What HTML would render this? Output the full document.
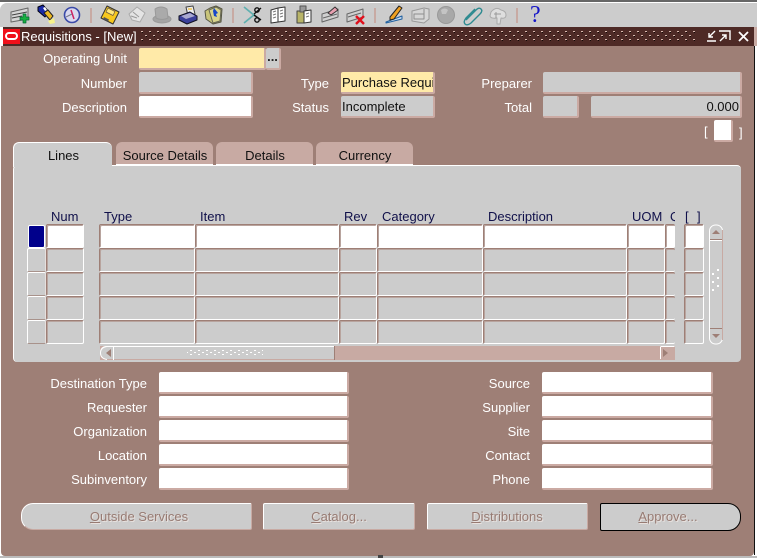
<!DOCTYPE html>
<html><head><meta charset="utf-8"><title>Requisitions</title>
<style>
html,body{margin:0;padding:0;width:757px;height:558px;overflow:hidden;background:#fff}
body{position:relative;font-family:"Liberation Sans",Arial,sans-serif;font-size:13px;letter-spacing:0;color:#000}
div,span,svg{position:absolute;box-sizing:border-box}
.l{color:#fff;text-align:right;line-height:14px;white-space:nowrap;height:14px}
.h{color:#10104a;line-height:14px;white-space:nowrap;top:209px}
.f{background:#ccc;border-style:solid;border-width:0 2px 2px 0;border-color:#cbaaa3;border-radius:2px;height:22px;line-height:21px;padding-left:1px;white-space:nowrap;overflow:hidden;color:#111}
.w{background:#fff}
.c{background:#ccc;border-style:solid;border-width:1px;border-color:#9e7f76 #fff #fff #9e7f76;box-shadow:inset 1px 1px 0 #b8a49e;height:24px;border-radius:2px}
.a{background:#fff}
.s{background:#ccc;border-style:solid;border-width:1px;border-color:#fff #e6e0de #a8928b #fff;height:24px;border-radius:2px;left:27px;width:19px}
.t{background:#c8aaa3;top:142px;height:23px;border-radius:6px 6px 0 0;text-align:center;line-height:27px;border-bottom:1px solid #fff;color:#111;padding-left:1px}
.b{background:#ccc;top:503px;height:27px;border:1px solid #fff;border-right-color:#c8aaa3;border-bottom-color:#c8aaa3;border-radius:2px;text-align:center;color:#977b73;line-height:26px;text-shadow:1px 1px 0 #e9e2df}
u{text-decoration:underline}
.sep{width:2px;height:15px;top:8px;background:#c8aaa3}
</style></head><body>
<div style="left:0;top:0;width:757px;height:2px;background:#666"></div>
<div style="left:0;top:3px;width:757px;height:24px;background:#ccc;border-radius:7px 0 0 0"></div>

<!-- toolbar icons -->
<svg style="left:0;top:3px" width="560" height="24" viewBox="0 3 560 24">
<g fill="none" stroke-linejoin="round">
<!-- new -->
<path d="M11 12l17-4v11l-17 3z" fill="#d6d6d6" stroke="#666"/><path d="M12 15l15-3M12 18l10-2" stroke="#444"/>
<path d="M23 14h3v3h3v3h-3v3h-3v-3h-3v-3h3z" fill="#18b040" stroke="#063" stroke-width=".7"/>
<!-- flashlight -->
<path d="M38 7l5-2 6 7-4 5-7-6z" fill="#1a2aa8" stroke="#001"/><path d="M43 8l2-1 2 3-2 1z" fill="#fff"/>
<path d="M44 13l4-3 5 6-3 4z" fill="#ecb820" stroke="#222"/><path d="M48 21l6-3 1 5-5 1z" fill="#f6f28a"/>
<!-- compass -->
<circle cx="72" cy="15" r="7.500" fill="#d8d8ee" stroke="#3a4aa8" stroke-width="1.600"/><path d="M71 10l3 9" stroke="#d02060" stroke-width="1.500"/><path d="M66 17l6-3" stroke="#778"/>
<!-- save -->
<path d="M107 6l12 6-6 12-12-6z" fill="#f7c81e" stroke="#333"/><path d="M108 8l7 3.500-2 4-7-3.500z" fill="#ffe87a" stroke="#654" stroke-width=".7"/><path d="M104 17l5 2.500-1 2-5-2.500z" fill="#555"/>
<!-- disabled doc -->
<path d="M129 14l8-7 8 6-5 9-8-2z" fill="#e4e4e4" stroke="#aaa"/><path d="M133 12l6 5M131 16l6 2" stroke="#999"/>
<!-- hat -->
<ellipse cx="162" cy="19" rx="9" ry="4" fill="#a4a4a4" stroke="#999"/><path d="M155 9q6-4 12 0l1 9q-6 3-12 0z" fill="#aaa" stroke="#999"/>
<!-- printer -->
<path d="M186 7l7-1 2 8-7 2z" fill="#eee" stroke="#444"/><path d="M179 16l11-4 7 4v4l-10 4-8-4z" fill="#3a3f9a" stroke="#112"/><path d="M181 16l9-3 5 3-9 3z" fill="#a9a9d0"/><path d="M188 9h4" stroke="#f0b000"/>
<!-- folder -->
<path d="M205 11l5-3 6-2 6 3-1 13-8 2-7-5z" fill="#c8c47a" stroke="#554"/><path d="M209 10l7-3 5 3-1 11-7 2z" fill="#d8d48c" stroke="#665"/><path d="M214 8l4 5-2 1 1 3-3-1-1-5z" fill="#1848c8"/>
<!-- scissors -->
<path d="M244 7l11 9M244 23l11-9" stroke="#5fb0b0" stroke-width="1.700"/><path d="M254 14l7-6M254 15l7 5" stroke="#111" stroke-width="1.400"/><circle cx="257" cy="10" r="2.200" stroke="#111" stroke-width="1.400"/><circle cx="257" cy="20" r="2.200" stroke="#111" stroke-width="1.400"/>
<!-- copy -->
<path d="M271 10l7-2v14l-7 1z" fill="#fff" stroke="#333"/><path d="M278 8l7-1v14l-7 1z" fill="#fff" stroke="#333"/><path d="M273 12l3-1M273 15l3-1M273 18l3-1M280 11l3-1M280 14l3-1M280 17l3-1" stroke="#777"/>
<!-- paste -->
<path d="M297 11h7v12h-7z" fill="#b8b468" stroke="#444"/><path d="M300 6h6v6h-6z" fill="#999" stroke="#555"/><path d="M304 11l7-1v12l-7 1z" fill="#fff" stroke="#333"/><path d="M306 14l3-1M306 17l3-1" stroke="#777"/>
<!-- clear -->
<path d="M322 14l16-5v8l-16 5z" fill="#d0d0d0" stroke="#666"/><path d="M328 13l7-6 3 3-7 5z" fill="#e8a0b0" stroke="#333"/><path d="M323 18l14-4" stroke="#666"/>
<!-- delete -->
<path d="M347 14l16-5v8l-16 5z" fill="#d0d0d0" stroke="#666"/><path d="M348 17l13-4" stroke="#666"/><path d="M356 16l8 8M364 16l-8 8" stroke="#e0101c" stroke-width="2.400"/>
<!-- pen -->
<path d="M386 22l16-6v3l-16 4z" fill="#cde" stroke="#2060a0"/><path d="M390 17l9-11 3 2-8 11-4 1z" fill="#f0a020" stroke="#222"/>
<!-- disabled -->
<path d="M412 11l12-3 5 1v10l-5 4-12-2z" fill="#d6d6d6" stroke="#999"/><path d="M414 14h10v5h-10zM424 9v5" stroke="#8e8e8e"/>
<!-- globe -->
<circle cx="446" cy="15" r="8.500" fill="#a8a8a8" stroke="#999"/><path d="M441 10q4-3 7 0l-2 4-4 0z" fill="#c4c4c4"/>
<!-- clip -->
<path d="M466 20l10-10q3-3 5-1t-1 5l-9 9q-4 3-6 1t1-6l9-9" stroke="#2e8a90" stroke-width="1.400"/>
<!-- disabled tree -->
<path d="M491 12q5-6 10-2 5 1 5 5t-5 3l-1 6h-3v-6q-6 1-7-2z" fill="#dedede" stroke="#aaa"/><path d="M496 12v6M501 14h-7" stroke="#999"/>
<!-- help -->
<text x="530" y="22" font-family="Liberation Serif,serif" font-size="24" fill="#1414c8" letter-spacing="0">?</text>
</g></svg>
<div class="sep" style="left:90px"></div><div class="sep" style="left:232px"></div><div class="sep" style="left:374px"></div><div class="sep" style="left:516px"></div>

<!-- title bar -->
<div style="left:3px;top:27px;width:751px;height:19px;background:#4e2a26"></div>
<div style="left:3px;top:29px;width:17px;height:15px;background:#f0101a"></div>
<div style="left:5px;top:32px;width:13px;height:8px;border:2px solid #fff;border-radius:4px"></div>
<div style="left:21px;top:29px;color:#fff;line-height:15px;white-space:nowrap">Requisitions - [New]</div>
<svg style="left:141px;top:30px" width="556" height="13"><defs><pattern id="p" width="8" height="8" patternUnits="userSpaceOnUse"><rect x="0" y="1" width="2" height="1" fill="#d8b8ae"/><rect x="1" y="2" width="1" height="1" fill="#120806"/><rect x="4" y="5" width="2" height="1" fill="#d8b8ae"/><rect x="5" y="6" width="1" height="1" fill="#120806"/></pattern></defs><rect width="556" height="13" fill="url(#p)"/></svg>
<svg style="left:705px;top:29px" width="48" height="16" fill="none" stroke="#fff" stroke-width="1.400"><path d="M2 12h9M10 2l-6 6M4 4v4h4"/><path d="M14 2h11v9" /><path d="M15 12l6-6M17 6h4v4"/><path d="M34 3l9 9M43 3l-9 9" stroke-width="1.800"/></svg>

<!-- main body -->
<div style="left:1px;top:46px;width:753px;height:510px;background:#9e7f76;border-radius:0 0 4px 4px"></div>
<div style="left:754px;top:46px;width:1px;height:509px;background:#111"></div>
<div style="left:754px;top:27px;width:3px;height:19px;background:#c8aaa3"></div>
<div style="left:0;top:556px;width:757px;height:2px;background:#bbb"></div>
<div style="left:378px;top:555px;width:5px;height:3px;background:#444"></div>

<!-- header labels/fields -->
<div class="l" style="right:630px;top:52px">Operating Unit</div>
<div class="f" style="left:139px;top:48px;width:127px;background:#ffeaa8"></div>
<div class="f" style="left:266px;top:48px;width:15px;text-align:center;font-weight:bold;line-height:17px;padding:0;color:#222">...</div>
<div class="l" style="right:630px;top:77px">Number</div>
<div class="f" style="left:139px;top:72px;width:114px"></div>
<div class="l" style="right:630px;top:101px">Description</div>
<div class="f w" style="left:139px;top:96px;width:114px"></div>
<div class="l" style="right:428px;top:77px">Type</div>
<div class="f" style="left:341px;top:72px;width:94px;background:#ffeaa8">Purchase Requisition</div>
<div class="l" style="right:428px;top:101px">Status</div>
<div class="f" style="left:341px;top:96px;width:94px">Incomplete</div>
<div class="l" style="right:225px;top:77px">Preparer</div>
<div class="f" style="left:543px;top:72px;width:199px"></div>
<div class="l" style="right:225px;top:101px">Total</div>
<div class="f" style="left:543px;top:96px;width:36px"></div>
<div class="f" style="left:591px;top:96px;width:151px;text-align:right;padding-right:1px">0.000</div>
<div class="l" style="left:704px;top:125px">[</div>
<div class="f w" style="left:714px;top:120px;width:19px"></div>
<div class="l" style="left:739px;top:126px">]</div>

<!-- tabs -->
<div style="left:13px;top:165px;width:728px;height:197px;background:#ccc;border-top:1px solid #fff;border-left:1px solid #fff;border-radius:4px"></div>
<div class="t" style="left:116px;width:97px">Source Details</div>
<div class="t" style="left:216px;width:97px">Details</div>
<div class="t" style="left:316px;width:97px">Currency</div>
<div class="t" style="left:13px;height:25px;background:#ccc;border:0;border-top:1px solid #fff;border-left:1px solid #fff;line-height:26px;width:99px">Lines</div>

<!-- table headers -->
<div class="h" style="left:51px;top:210px">Num</div>
<div class="h" style="left:104px;top:210px">Type</div>
<div class="h" style="left:200px;top:210px">Item</div>
<div class="h" style="left:344px;top:210px">Rev</div>
<div class="h" style="left:382px;top:210px">Category</div>
<div class="h" style="left:488px;top:210px">Description</div>
<div class="h" style="left:632px;top:210px">UOM</div>
<div class="h" style="left:670px;top:210px;width:5px;overflow:hidden">Q</div>
<div class="h" style="left:685px;top:210px">[</div>
<div class="h" style="left:697px;top:210px">]</div>

<!-- rows -->
<div style="left:28px;top:225px;width:17px;height:23px;background:#00008b;border:1px solid #fff;border-radius:2px"></div>
<div class="c a" style="left:46px;top:224px;width:38px"></div><div class="c a" style="left:99px;top:224px;width:96px"></div><div class="c a" style="left:195px;top:224px;width:144px"></div><div class="c a" style="left:339px;top:224px;width:38px"></div><div class="c a" style="left:377px;top:224px;width:106px"></div><div class="c a" style="left:483px;top:224px;width:144px"></div><div class="c a" style="left:627px;top:224px;width:38px"></div><div class="c a" style="left:665px;top:224px;width:10px;border-right:0"></div><div class="c a" style="left:684px;top:224px;width:20px"></div>

<div class="s" style="top:248px"></div><div class="c" style="left:46px;top:248px;width:38px"></div><div class="c" style="left:99px;top:248px;width:96px"></div><div class="c" style="left:195px;top:248px;width:144px"></div><div class="c" style="left:339px;top:248px;width:38px"></div><div class="c" style="left:377px;top:248px;width:106px"></div><div class="c" style="left:483px;top:248px;width:144px"></div><div class="c" style="left:627px;top:248px;width:38px"></div><div class="c" style="left:665px;top:248px;width:10px;border-right:0"></div><div class="c" style="left:684px;top:248px;width:20px"></div>

<div class="s" style="top:272px"></div><div class="c" style="left:46px;top:272px;width:38px"></div><div class="c" style="left:99px;top:272px;width:96px"></div><div class="c" style="left:195px;top:272px;width:144px"></div><div class="c" style="left:339px;top:272px;width:38px"></div><div class="c" style="left:377px;top:272px;width:106px"></div><div class="c" style="left:483px;top:272px;width:144px"></div><div class="c" style="left:627px;top:272px;width:38px"></div><div class="c" style="left:665px;top:272px;width:10px;border-right:0"></div><div class="c" style="left:684px;top:272px;width:20px"></div>

<div class="s" style="top:296px"></div><div class="c" style="left:46px;top:296px;width:38px"></div><div class="c" style="left:99px;top:296px;width:96px"></div><div class="c" style="left:195px;top:296px;width:144px"></div><div class="c" style="left:339px;top:296px;width:38px"></div><div class="c" style="left:377px;top:296px;width:106px"></div><div class="c" style="left:483px;top:296px;width:144px"></div><div class="c" style="left:627px;top:296px;width:38px"></div><div class="c" style="left:665px;top:296px;width:10px;border-right:0"></div><div class="c" style="left:684px;top:296px;width:20px"></div>

<div class="s" style="top:320px"></div><div class="c" style="left:46px;top:320px;width:38px"></div><div class="c" style="left:99px;top:320px;width:96px"></div><div class="c" style="left:195px;top:320px;width:144px"></div><div class="c" style="left:339px;top:320px;width:38px"></div><div class="c" style="left:377px;top:320px;width:106px"></div><div class="c" style="left:483px;top:320px;width:144px"></div><div class="c" style="left:627px;top:320px;width:38px"></div><div class="c" style="left:665px;top:320px;width:10px;border-right:0"></div><div class="c" style="left:684px;top:320px;width:20px"></div>

<!-- vertical scrollbar -->
<svg style="left:708px;top:224px" width="16" height="121"><rect x="1.500" y="1" width="13" height="119" rx="6" fill="#ccc" stroke="#fff"/><path d="M14.500 6v110" stroke="#c8aaa3"/><path d="M2 15.500h12M2 104.500h12" stroke="#9e7f76"/><path d="M2 16.500h12" stroke="#fff"/><path d="M4 10l4-4 4 4zM4 110l4 4 4-4z" fill="#9e7f76"/><g fill="#fff"><rect x="9" y="45" width="2" height="2"/><rect x="4" y="49" width="2" height="2"/><rect x="9" y="53" width="2" height="2"/><rect x="4" y="57" width="2" height="2"/><rect x="9" y="61" width="2" height="2"/><rect x="4" y="65" width="2" height="2"/></g></svg>

<!-- horizontal scrollbar -->
<div style="left:100px;top:346px;width:575px;height:14px;background:#c8aaa3"></div>
<div style="left:100px;top:346px;width:235px;height:14px;background:#ccc;border-top:1px solid #fff;border-bottom:1px solid #c8aaa3;border-radius:6px 0 0 6px"></div>
<div style="left:113px;top:346px;width:1px;height:14px;background:#fff"></div>
<div style="left:334px;top:346px;width:1px;height:14px;background:#9e7f76"></div>
<svg style="left:100px;top:346px" width="575" height="14"><path d="M11 3v8l-5-4zM563 3v8l5-4z" fill="#9e7f76"/><path d="M7 .5q-6.500 1-6.500 6.500t6.500 6.500" stroke="#fff" fill="none"/><path d="M560.500 1v12M560.500 .5h14" stroke="#fff" fill="none"/><defs><pattern id="q" width="8" height="4" patternUnits="userSpaceOnUse"><rect x="2" y="0" width="2" height="1" fill="#fff"/><rect x="6" y="2" width="2" height="1" fill="#fff"/></pattern></defs><rect x="87" y="3" width="76" height="7" fill="url(#q)"/></svg>

<!-- lower fields -->
<div class="l" style="right:610px;top:377px">Destination Type</div><div class="f w" style="left:159px;top:372px;width:190px"></div>
<div class="l" style="right:610px;top:401px">Requester</div><div class="f w" style="left:159px;top:396px;width:190px"></div>
<div class="l" style="right:610px;top:425px">Organization</div><div class="f w" style="left:159px;top:420px;width:190px"></div>
<div class="l" style="right:610px;top:449px">Location</div><div class="f w" style="left:159px;top:444px;width:190px"></div>
<div class="l" style="right:610px;top:473px">Subinventory</div><div class="f w" style="left:159px;top:468px;width:190px"></div>
<div class="l" style="right:227px;top:377px">Source</div><div class="f w" style="left:542px;top:372px;width:171px"></div>
<div class="l" style="right:227px;top:401px">Supplier</div><div class="f w" style="left:542px;top:396px;width:171px"></div>
<div class="l" style="right:227px;top:425px">Site</div><div class="f w" style="left:542px;top:420px;width:171px"></div>
<div class="l" style="right:227px;top:449px">Contact</div><div class="f w" style="left:542px;top:444px;width:171px"></div>
<div class="l" style="right:227px;top:473px">Phone</div><div class="f w" style="left:542px;top:468px;width:171px"></div>

<!-- buttons -->
<div class="b" style="left:21px;width:231px;border-radius:12px 2px 2px 12px;padding-left:5px"><u>O</u>utside Services</div>
<div class="b" style="left:263px;width:152px"><u>C</u>atalog...</div>
<div class="b" style="left:427px;width:161px;padding-right:1px"><u>D</u>istributions</div>
<div class="b" style="left:600px;width:141px;height:28px;border-color:#000;border-radius:2px 13px 13px 2px;padding-right:5px"><u>A</u>pprove...</div>
</body></html>
